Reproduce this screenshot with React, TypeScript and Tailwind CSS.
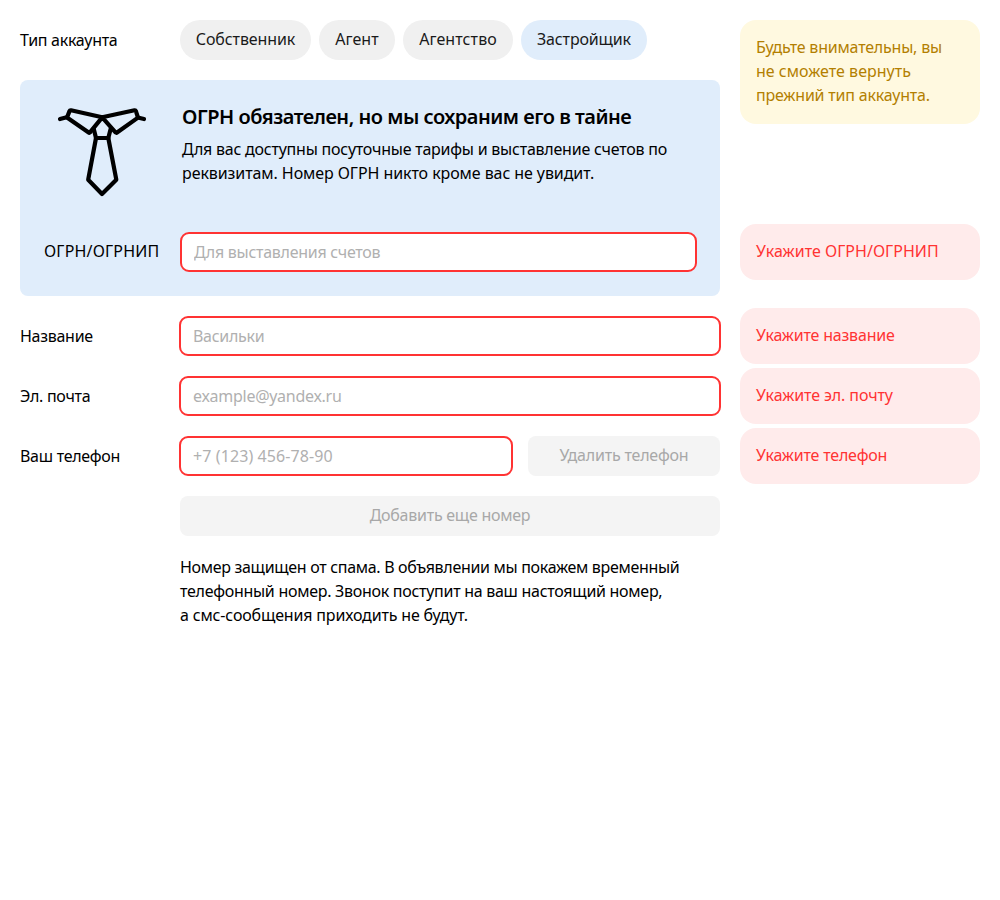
import type { ReactNode } from 'react';

const accountTypes = [
  { title: 'Собственник', width: 'w-[131px] tracking-[-0.1px]' },
  { title: 'Агент', width: 'w-[76px] tracking-[0.1px]' },
  { title: 'Агентство', width: 'w-[110px] tracking-[0.1px]' },
  { title: 'Застройщик', width: 'w-[126px] tracking-[-0.15px]', active: true },
];

function TieIcon() {
  return (
    <svg
      className="h-[100px] w-[100px] shrink-0"
      viewBox="0 0 100 100"
      fill="none"
      stroke="#000"
      strokeWidth="4.2"
      strokeLinecap="round"
      strokeLinejoin="round"
    >
      <path d="M8 19l6.7-1.7M92 19l-6.3-1.5" />
      <path d="M50.2 17.3L19 10.3Q17.9 10.1 17.5 11.1L15 17.5 37 32.8 38 32.3zM50.2 17.3L82.5 10.3Q83.5 10.1 83.9 11.1L86 17.6 64.7 32.8 63.5 32.3z" />
      <path d="M41.7 28.7L44 38h12.3l2.4-9.3" />
      <path d="M44 38L36.2 79.7 50 94l14.3-14.3L56.3 38" />
    </svg>
  );
}

function Row({ label, children }: { label: string; children: ReactNode }) {
  return (
    <div className="flex h-10 items-center">
      <div className="w-40 shrink-0 whitespace-nowrap">{label}</div>
      <div className="flex w-[540px]">{children}</div>
    </div>
  );
}

function Field({ placeholder, className }: { placeholder: string; className: string }) {
  return (
    <input
      aria-label={placeholder}
      placeholder={placeholder}
      className={`h-10 rounded-[9px] border-2 border-[#ff3333] bg-white px-3 outline-none placeholder:text-[#b0b0b0] ${className}`}
    />
  );
}

function ErrorHint({ children, className = '' }: { children: ReactNode; className?: string }) {
  return (
    <div className={`h-14 rounded-2xl bg-[#ffebeb] px-4 pt-[15px] text-[#ff3333] ${className}`}>
      {children}
    </div>
  );
}

export default function App() {
  return (
    <div className="flex min-h-[900px] w-[1000px] items-start gap-5 bg-white p-5 font-['Noto_Sans',sans-serif] text-[16px] leading-6 tracking-[-0.28px] text-black">
      <div className="flex w-[700px] flex-col gap-5">
        <Row label="Тип аккаунта">
          <div className="flex gap-2">
            {accountTypes.map((t) => (
              <button
                key={t.title}
                className={`h-10 rounded-full pb-0.5 text-center whitespace-nowrap text-[#1a1a1a] ${t.width} ${t.active ? 'bg-[#e0edfb]' : 'bg-[#f0f0f0]'}`}
              >
                {t.title}
              </button>
            ))}
          </div>
        </Row>

        <section className="flex h-[216px] flex-col justify-between rounded-lg bg-[#e0edfb] pt-5 pb-6 pl-6">
          <div className="flex gap-[30px] pl-2">
            <TieIcon />
            <div className="whitespace-nowrap">
              <h2 className="pt-[3px] text-[20px] leading-7 font-semibold tracking-[-0.5px]">ОГРН обязателен, но мы сохраним его в тайне</h2>
              <p className="pt-[6px] tracking-[-0.23px]">
                Для вас доступны посуточные тарифы и выставление счетов по
                <br />
                <span className="tracking-[-0.08px]">реквизитам. Номер ОГРН никто кроме вас не увидит.</span>
              </p>
            </div>
          </div>
          <div className="flex h-10 items-center">
            <div className="w-[136px] pb-0.5 tracking-[0.17px]">ОГРН/ОГРНИП</div>
            <Field placeholder="Для выставления счетов" className="w-[517px]" />
          </div>
        </section>

        <Row label="Название">
          <Field placeholder="Васильки" className="-mx-px w-[542px] shrink-0" />
        </Row>
        <Row label="Эл. почта">
          <Field placeholder="example@yandex.ru" className="-mx-px w-[542px] shrink-0" />
        </Row>
        <Row label="Ваш телефон">
          <Field placeholder="+7 (123) 456-78-90" className="-ml-px mr-[15px] w-[334px] tracking-[0.1px]" />
          <button className="h-10 w-48 rounded-lg bg-[#f4f4f4] pb-0.5 tracking-[-0.2px] text-[#a8a8a8]">Удалить телефон</button>
        </Row>
        <div className="flex flex-col gap-5 pl-40">
          <button className="h-10 rounded-lg bg-[#f4f4f4] pb-0.5 tracking-[-0.25px] text-[#a8a8a8]">Добавить еще номер</button>
          <p className="-mt-px whitespace-nowrap tracking-[-0.31px]">
            Номер защищен от спама. В объявлении мы покажем временный
            <br />
            <span className="tracking-[-0.28px]">телефонный номер. Звонок поступит на ваш настоящий номер,</span>
            <br />
            <span className="tracking-[-0.16px]">а смс-сообщения приходить не будут.</span>
          </p>
        </div>
      </div>

      <aside className="flex w-60 flex-col tracking-[-0.2px] whitespace-nowrap">
        <div className="h-[104px] rounded-2xl bg-[#fff9e0] px-4 pt-[15px] text-[#b37f00]">
          Будьте внимательны, вы
          <br />
          <span className="tracking-[0.02px]">не сможете вернуть</span>
          <br />
          прежний тип аккаунта.
        </div>
        <ErrorHint className="mt-[100px] tracking-[0.02px]">Укажите ОГРН/ОГРНИП</ErrorHint>
        <ErrorHint className="mt-7">Укажите название</ErrorHint>
        <ErrorHint className="mt-1 tracking-[-0.1px]">Укажите эл. почту</ErrorHint>
        <ErrorHint className="mt-1">Укажите телефон</ErrorHint>
      </aside>
    </div>
  );
}
